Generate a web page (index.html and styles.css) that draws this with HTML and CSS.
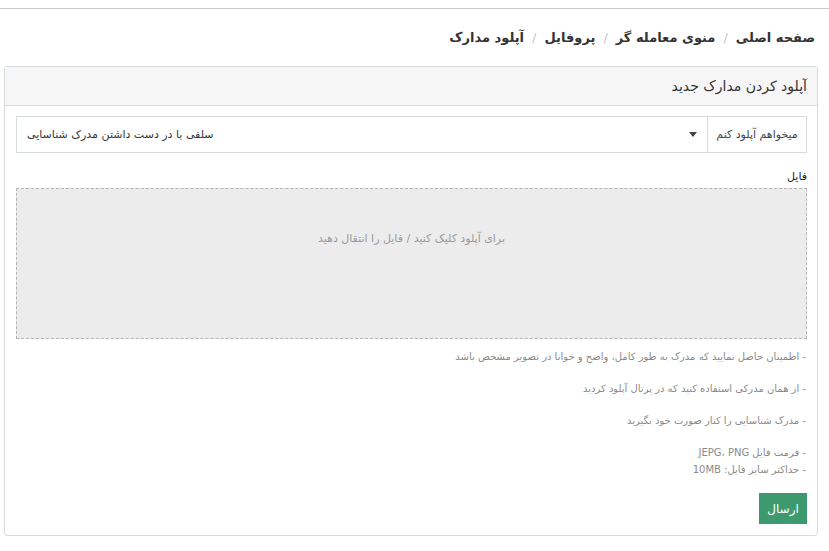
FILE: index.html
```html
<!DOCTYPE html>
<html lang="fa" dir="rtl">
<head>
<meta charset="utf-8">
<title>آپلود مدارک</title>
<link rel="stylesheet" href="styles.css">
</head>
<body>
<div class="topbar"></div>
<div class="page">
  <nav class="breadcrumb">
    <span class="crumb">صفحه اصلی</span><span class="sep">/</span>
    <span class="crumb">منوی معامله گر</span><span class="sep">/</span>
    <span class="crumb">پروفایل</span><span class="sep">/</span>
    <span class="crumb">آپلود مدارک</span>
  </nav>
  <section class="card">
    <header class="card-head">آپلود کردن مدارک جدید</header>
    <div class="card-body">
      <div class="input-group">
        <div class="addon">میخواهم آپلود کنم</div>
        <div class="select">
          <span class="caret"></span>
          <span class="select-value">سلفی با در دست داشتن مدرک شناسایی</span>
        </div>
      </div>
      <div class="label">فایل</div>
      <div class="dropzone">برای آپلود کلیک کنید / فایل را انتقال دهید</div>
      <div class="notes">
        <p class="note">- اطمینان حاصل نمایید که مدرک به طور کامل، واضح و خوانا در تصویر مشخص باشد</p>
        <p class="note">- از همان مدرکی استفاده کنید که در پرتال آپلود کردید</p>
        <p class="note">- مدرک شناسایی را کنار صورت خود بگیرید</p>
        <p class="note tight">- فرمت فایل JEPG، PNG</p>
        <p class="note tight">- حداکثر سایز فایل: 10MB</p>
      </div>
      <button class="btn">ارسال</button>
    </div>
  </section>
</div>
</body>
</html>
```

FILE: styles.css
```css
* { box-sizing: border-box; }
html, body { margin: 0; padding: 0; background: #fff; }
body {
  font-family: "DejaVu Sans", "Noto Sans", sans-serif;
  color: #333;
  width: 829px;
}
.topbar {
  height: 9px;
  border-bottom: 1px solid #c9c9c9;
}
.page {
  padding: 0 11px 0 4px;
}
.breadcrumb {
  display: flex;
  align-items: center;
  height: 57px;
  padding: 0 3px 0 0;
  font-size: 13px;
  font-weight: bold;
  color: #333;
}
.crumb { white-space: nowrap; }
.sep {
  color: #c8c8c8;
  font-weight: normal;
  padding: 0 8px;
  font-size: 13px;
}
.card {
  border: 1px solid #d6dbe0;
  border-radius: 3px;
  background: #fff;
}
.card-head {
  height: 39px;
  background: #f6f6f6;
  border-bottom: 1px solid #d6dbe0;
  padding: 0 10px;
  display: flex;
  align-items: center;
  font-size: 14px;
  color: #333;
}
.card-body {
  padding: 10px 10px 11px 11px;
}
.input-group {
  display: flex;
  height: 37px;
}
.addon {
  width: 100px;
  flex: none;
  border: 1px solid #d6dbe0;
  display: flex;
  align-items: center;
  justify-content: center;
  font-size: 11px;
  color: #444;
  background: #fff;
}
.select {
  flex: 1;
  border: 1px solid #d6dbe0;
  border-right: none;
  display: flex;
  align-items: center;
  justify-content: space-between;
  padding: 0 10px 0 10px;
  font-size: 11px;
  color: #333;
}
.caret {
  width: 0;
  height: 0;
  border-left: 4px solid transparent;
  border-right: 4px solid transparent;
  border-top: 5px solid #444;
}
.label {
  margin-top: 17px;
  height: 18px;
  font-size: 11px;
  color: #222;
}
.dropzone {
  height: 151px;
  border: 1px dashed #b4b4b4;
  background: #ececec;
  color: #9a9a9a;
  font-size: 11px;
  text-align: center;
  padding-top: 43px;
}
.notes {
  margin-top: 10px;
  padding-right: 1px;
}
.note {
  margin: 0 0 16px;
  font-size: 10px;
  line-height: 16px;
  color: #8a8a8a;
}
.note.tight { margin: 0 0 1px; }
.btn {
  margin-top: 15px;
  width: 48px;
  height: 31px;
  border: none;
  background: #3d9a6e;
  color: #fff;
  font-family: inherit;
  font-size: 12px;
  padding: 0;
  display: block;
}
```
